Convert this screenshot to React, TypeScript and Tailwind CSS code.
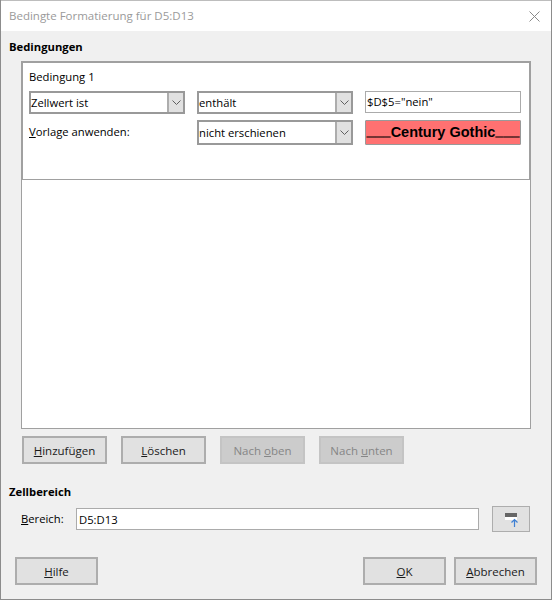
const font = { fontFamily: '"Open Sans", "Noto Sans", sans-serif' };

function Btn({ children, disabled, w = "w-[85px]", className = "" }: { children: React.ReactNode; disabled?: boolean; w?: string; className?: string }) {
  return (
    <div
      className={`h-[28px] ${w} shrink-0 flex items-center justify-center border-2 pt-[2px] text-[11.5px] ${
        disabled ? "bg-[#cccccc] border-[#c4c4c4] text-[#868686]" : "bg-[#e1e1e1] border-[#adadad] text-[#1a1a1a]"
      } ${className}`}
    >
      <span>{children}</span>
    </div>
  );
}

function Combo({ text, className = "" }: { text: string; className?: string }) {
  return (
    <div className={`w-[156px] shrink-0 flex border-2 border-[#999999] bg-white ${className}`}>
      <div className="flex-1 text-black flex items-center leading-none">{text}</div>
      <div className="w-[16px] bg-[#e1e1e1] border-l-2 border-[#adadad] flex items-center justify-center">
        <svg width="9" height="5" viewBox="0 0 9 5" fill="none" stroke="#606060" strokeWidth="1">
          <path d="M0.5 0.5 L4.5 4.5 L8.5 0.5" />
        </svg>
      </div>
    </div>
  );
}

export default function App() {
  return (
    <div style={font} className="w-[552px] h-[600px] flex flex-col border-l border-r border-b border-[#8c8c8c] bg-[#f0f0f0] overflow-hidden text-[11.25px] text-black">
      <div className="h-[31px] shrink-0 bg-white flex items-center justify-between pl-[8px] pr-[11px] border-t border-[#bdbdbd]">
        <span className="text-[#9a9a9a] text-[11.5px]">Bedingte Formatierung für D5:D13</span>
        <svg width="11" height="11" viewBox="0 0 11 11" stroke="#8a8a8a" strokeWidth="1" fill="none">
          <path d="M0.5 0.5 L10.5 10.5 M10.5 0.5 L0.5 10.5" />
        </svg>
      </div>

      <div className="flex-1 flex flex-col">
        <div className="pl-[8px] pt-[7px] h-[30px] font-bold leading-[17px]">Bedingungen</div>

        <div className="ml-[20px] w-[510px] h-[368px] border border-[#a0a0a0] bg-white shrink-0">
          <div className="h-[118px] border border-[#a0a0a0] pl-[6px] pt-[6px]">
            <div className="h-[22px] leading-[16px]">Bedingung 1</div>
            <div className="flex items-start gap-[12px]">
              <Combo text="Zellwert ist" className="h-[23px]" />
              <Combo text="enthält" className="h-[23px]" />
              <div className="w-[156px] shrink-0 h-[22px] border border-[#ababab] flex items-center pl-[1px] leading-none">$D$5="nein"</div>
            </div>
            <div className="flex items-center gap-[12px] mt-[6px]">
              <div className="w-[156px] shrink-0">
                <span><span className="underline">V</span>orlage anwenden:</span>
              </div>
              <Combo text="nicht erschienen" className="h-[25px]" />
              <div className="w-[156px] shrink-0 h-[25px] bg-[#ff7171] border border-[#999999] rounded-[1px] flex items-center justify-center pb-[3px] font-bold text-[14.5px] leading-none overflow-hidden whitespace-nowrap text-black" style={{ fontFamily: '"Liberation Sans", sans-serif' }}>
                <span>
                  <span className="align-[2px] [text-shadow:0_1px_0_#000]">___</span>Century Gothic<span className="align-[2px] [text-shadow:0_1px_0_#000]">___</span>
                </span>
              </div>
            </div>
          </div>
        </div>

        <div className="flex gap-[14px] ml-[21px] mt-[7px]">
          <Btn><span className="underline">H</span>inzufügen</Btn>
          <Btn><span className="underline">L</span>öschen</Btn>
          <Btn disabled>Nach <span className="underline">o</span>ben</Btn>
          <Btn disabled>Nach <span className="underline">u</span>nten</Btn>
        </div>

        <div className="ml-[8px] mt-[19px] h-[17px] font-bold leading-[17px]">Zellbereich</div>

        <div className="flex items-center mt-[6px] ml-[20px]">
          <div className="w-[55px] pt-[1px]"><span className="underline">B</span>ereich:</div>
          <div className="w-[403px] h-[22px] border border-[#ababab] bg-white flex items-center pl-[2px] pt-[1px] leading-none">D5:D13</div>
          <div className="ml-[13px] w-[38px] h-[26px] bg-[#e1e1e1] border border-[#adadad] flex items-center justify-center">
            <svg width="14" height="16" viewBox="0 0 14 16" fill="none">
              <rect x="1" y="2" width="12" height="7" fill="#ffffff" />
              <rect x="1" y="2" width="12" height="4" fill="#666666" />
              <path d="M10.5 16 V8.5 M7.5 11.5 L10.5 8.5 L13.5 11.5" stroke="#3f80d4" strokeWidth="1.2" />
            </svg>
          </div>
        </div>

        <div className="flex mt-[25px] ml-[14px] gap-[8px]">
          <Btn w="w-[83px]" className="mr-[257px]">
            <span className="underline">H</span>ilfe
          </Btn>
          <Btn w="w-[83px]"><span className="underline">O</span>K</Btn>
          <Btn w="w-[83px]"><span className="underline">A</span>bbrechen</Btn>
        </div>
      </div>
    </div>
  );
}
